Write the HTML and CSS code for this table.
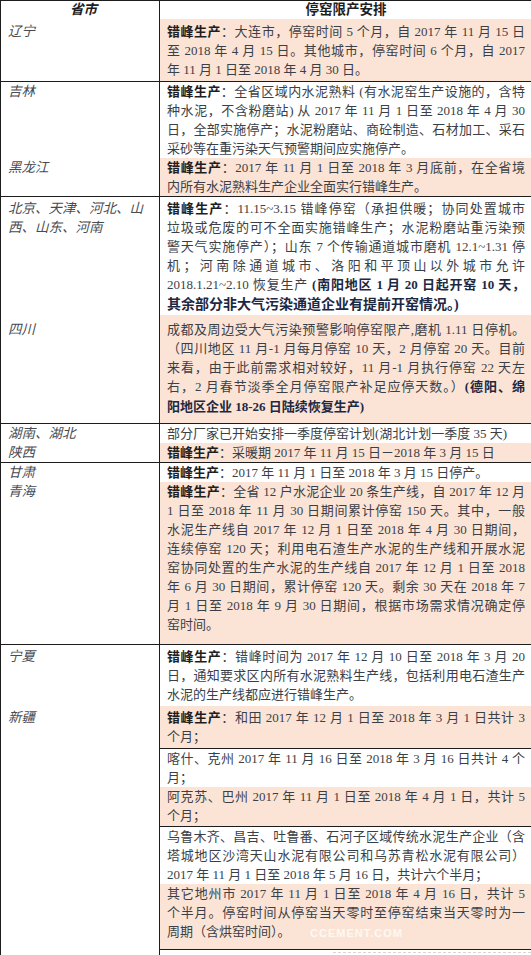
FILE: index.html
```html
<!DOCTYPE html>
<html lang="zh-CN">
<head>
<meta charset="utf-8">
<title>停窑限产安排</title>
<link rel="stylesheet" href="styles.css">
</head>
<body>
<div class="sheet">
  <div class="row head">
    <div class="key"><b class="hk">省市</b></div>
    <div class="val"><b>停窑限产安排</b></div>
  </div>

  <div class="row r-ln">
    <div class="key">辽宁</div>
    <div class="val peach">
      <span class="ln"><b>错峰生产</b>：大连市，停窑时间 5 个月，自 2017 年 11 月 15 日</span>
      <span class="ln">至 2018 年 4 月 15 日。其他城市，停窑时间 6 个月，自 2017</span>
      <span class="ln end">年 11 月 1 日至 2018 年 4 月 30 日。</span>
    </div>
  </div>

  <div class="row rule">
    <div class="key">吉林</div>
    <div class="val">
      <span class="ln"><b>错峰生产</b>：全省区域内水泥熟料 (有水泥窑生产设施的，含特</span>
      <span class="ln">种水泥，不含粉磨站) 从 2017 年 11 月 1 日至 2018 年 4 月 30</span>
      <span class="ln">日，全部实施停产；水泥粉磨站、商砼制造、石材加工、采石</span>
      <span class="ln end">采砂等在重污染天气预警期间应实施停产。</span>
    </div>
  </div>

  <div class="row">
    <div class="key">黑龙江</div>
    <div class="val peach">
      <span class="ln"><b>错峰生产</b>：2017 年 11 月 1 日至 2018 年 3 月底前，在全省境</span>
      <span class="ln end">内所有水泥熟料生产企业全面实行错峰生产。</span>
    </div>
  </div>

  <div class="row rule r-bj">
    <div class="key">北京、天津、河北、山<br>西、山东、河南</div>
    <div class="val">
      <span class="ln"><b>错峰生产</b>：11.15~3.15 错峰停窑（承担供暖；协同处置城市</span>
      <span class="ln">垃圾或危废的可不全面实施错峰生产；水泥粉磨站重污染预</span>
      <span class="ln">警天气实施停产）；山东 7 个传输通道城市磨机 12.1~1.31 停</span>
      <span class="ln">机；河南除通道城市、洛阳和平顶山以外城市允许</span>
      <span class="ln">2018.1.21~2.10 恢复生产 <b class="nv">(南阳地区 1 月 20 日起开窑 10 天，</b></span>
      <span class="ln end tall"><b class="nv big">其余部分非大气污染通道企业有提前开窑情况。)</b></span>
    </div>
  </div>

  <div class="row r-sc">
    <div class="key">四川</div>
    <div class="val peach">
      <span class="ln">成都及周边受大气污染预警影响停窑限产,磨机 1.11 日停机。</span>
      <span class="ln">（四川地区 11 月-1 月每月停窑 10 天，2 月停窑 20 天。目前</span>
      <span class="ln">来看，由于此前需求相对较好，11 月-1 月执行停窑 22 天左</span>
      <span class="ln">右，2 月春节淡季全月停窑限产补足应停天数。）<b class="nv">(德阳、绵</b></span>
      <span class="ln end tall"><b class="nv">阳地区企业 18-26 日陆续恢复生产)</b></span>
    </div>
  </div>

  <div class="row rule">
    <div class="key">湖南、湖北</div>
    <div class="val">
      <span class="ln end">部分厂家已开始安排一季度停窑计划(湖北计划一季度 35 天)</span>
    </div>
  </div>

  <div class="row">
    <div class="key">陕西</div>
    <div class="val peach">
      <span class="ln end"><b>错峰生产</b>：采暖期 2017 年 11 月 15 日－2018 年 3 月 15 日</span>
    </div>
  </div>

  <div class="row rule">
    <div class="key">甘肃</div>
    <div class="val">
      <span class="ln end"><b>错峰生产</b>：2017 年 11 月 1 日至 2018 年 3 月 15 日停产。</span>
    </div>
  </div>

  <div class="row r-qh">
    <div class="key">青海</div>
    <div class="val peach">
      <span class="ln"><b>错峰生产</b>：全省 12 户水泥企业 20 条生产线，自 2017 年 12 月</span>
      <span class="ln">1 日至 2018 年 11 月 30 日期间累计停窑 150 天。其中，一般</span>
      <span class="ln">水泥生产线自 2017 年 12 月 1 日至 2018 年 4 月 30 日期间，</span>
      <span class="ln">连续停窑 120 天；利用电石渣生产水泥的生产线和开展水泥</span>
      <span class="ln">窑协同处置的生产水泥的生产线自 2017 年 12 月 1 日至 2018</span>
      <span class="ln">年 6 月 30 日期间，累计停窑 120 天。剩余 30 天在 2018 年 7</span>
      <span class="ln">月 1 日至 2018 年 9 月 30 日期间，根据市场需求情况确定停</span>
      <span class="ln end">窑时间。</span>
    </div>
  </div>

  <div class="row rule r-nx">
    <div class="key">宁夏</div>
    <div class="val">
      <span class="ln"><b>错峰生产</b>：错峰时间为 2017 年 12 月 10 日至 2018 年 3 月 20</span>
      <span class="ln">日，通知要求区内所有水泥熟料生产线，包括利用电石渣生产</span>
      <span class="ln end">水泥的生产线都应进行错峰生产。</span>
    </div>
  </div>

  <div class="row r-ht">
    <div class="key">新疆</div>
    <div class="val peach">
      <span class="ln"><b>错峰生产</b>：和田 2017 年 12 月 1 日至 2018 年 3 月 1 日共计 3</span>
      <span class="ln end">个月；</span>
    </div>
  </div>

  <div class="row rule-r">
    <div class="key"></div>
    <div class="val">
      <span class="ln">喀什、克州 2017 年 11 月 16 日至 2018 年 3 月 16 日共计 4 个</span>
      <span class="ln end">月；</span>
    </div>
  </div>

  <div class="row r-aks">
    <div class="key"></div>
    <div class="val peach">
      <span class="ln">阿克苏、巴州 2017 年 11 月 1 日至 2018 年 4 月 1 日，共计 5</span>
      <span class="ln end">个月；</span>
    </div>
  </div>

  <div class="row rule-r">
    <div class="key"></div>
    <div class="val">
      <span class="ln">乌鲁木齐、昌吉、吐鲁番、石河子区域传统水泥生产企业（含</span>
      <span class="ln">塔城地区沙湾天山水泥有限公司和乌苏青松水泥有限公司）</span>
      <span class="ln end">2017 年 11 月 1 日至 2018 年 5 月 16 日，共计六个半月；</span>
    </div>
  </div>

  <div class="row r-qt">
    <div class="key"></div>
    <div class="val peach last">
      <span class="ln">其它地州市 2017 年 11 月 1 日至 2018 年 4 月 16 日，共计 5</span>
      <span class="ln">个半月。停窑时间从停窑当天零时至停窑结束当天零时为一</span>
      <span class="ln end">周期（含烘窑时间）。</span>
      <span class="mark">CCEMENT.COM</span>
    </div>
  </div>

  <div class="row tail">
    <div class="key"></div>
    <div class="val"><span class="dash"></span></div>
  </div>
</div>
</body>
</html>
```

FILE: styles.css
```css
* {
  box-sizing: border-box;
  margin: 0;
  padding: 0;
}

html,
body {
  background: #ffffff;
  overflow: hidden;
}

body {
  font-family: "Liberation Serif", "Noto Sans CJK SC", serif;
  font-size: 13px;
  color: #3b3f47;
}

.sheet {
  display: grid;
  grid-template-columns: 159px 1fr;
  width: 531px;
  border-left: 1px solid #1c1c1c;
  border-top: 1px solid #1c1c1c;
}

.row {
  display: contents;
}

.key,
.val {
  line-height: 19px;
}

.key {
  border-right: 1px solid #1c1c1c;
  padding-left: 7px;
  font-style: italic;
  font-size: 13.5px;
  color: #474b52;
}

.val {
  position: relative;
  padding: 0 6px 0 7px;
}

.peach {
  background: #fbe4d5;
}

.ln {
  display: block;
  text-align: justify;
  text-align-last: justify;
}

.ln.end {
  text-align-last: left;
}

.ln.tall {
  line-height: 21px;
}

b {
  font-weight: 700;
  color: #1e1e1e;
}

.nv {
  color: #1d2843;
}

.nv.big {
  font-size: 14px;
}

.head > .key,
.head > .val {
  line-height: 18px;
  text-align: center;
  font-size: 13.5px;
}

.head .hk {
  font-style: italic;
}

.rule > .key,
.rule > .val,
.rule-r > .val {
  border-top: 1px solid #1c1c1c;
}

.r-ln > .key,
.r-ln > .val {
  padding-top: 3px;
  padding-bottom: 2px;
}

.r-bj > .key,
.r-bj > .val {
  padding-top: 2px;
}

.r-sc > .key,
.r-sc > .val {
  padding-top: 5px;
  padding-bottom: 6px;
}

.r-qh > .key,
.r-qh > .val {
  padding-bottom: 10px;
}

.r-nx > .key,
.r-nx > .val,
.r-ht > .key,
.r-ht > .val {
  padding-top: 2px;
  padding-bottom: 2px;
}

.r-aks > .val {
  padding-bottom: 1px;
}

.r-qt > .val {
  padding-bottom: 8px;
}

.val.last {
  border-bottom: 1px solid #1c1c1c;
}

.mark {
  position: absolute;
  right: 128px;
  bottom: 6px;
  font-family: "Liberation Sans", sans-serif;
  font-weight: 700;
  font-size: 11px;
  letter-spacing: 1px;
  color: rgba(255, 255, 255, 0.75);
}

.tail > .key {
  height: 12px;
}

.tail > .val {
  padding: 0;
}

.dash {
  position: absolute;
  top: 2px;
  left: 173px;
  width: 198px;
  border-top: 1px dashed #d6d6d6;
}
```
